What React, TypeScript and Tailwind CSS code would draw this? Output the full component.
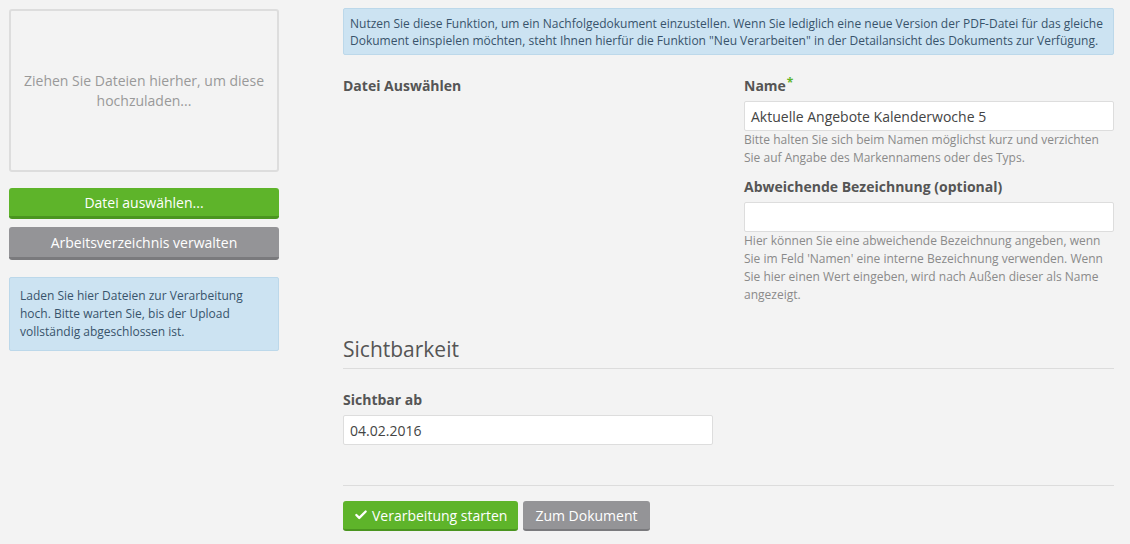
import { Check } from 'lucide-react';

const font = { fontFamily: '"Open Sans", "Liberation Sans", sans-serif' };

function Sidebar() {
  return (
    <div className="flex w-[270px] shrink-0 flex-col">
      <div className="flex h-[163px] items-center justify-center rounded-[3px] border-2 border-[#dddddd] bg-[#f3f3f3] px-[10px] text-center text-[14px] leading-[20px] text-[#999999]">
        Ziehen Sie Dateien hierher, um diese hochzuladen...
      </div>
      <button
        type="button"
        className="mt-[16px] h-[31px] rounded-[3px] border-b-[3px] border-[#4a951f] bg-[#5eb42a] text-[14px] text-white"
      >
        Datei auswählen...
      </button>
      <button
        type="button"
        className="mt-[8px] h-[33px] rounded-[3px] border-b-[3px] border-[#7a7a7d] bg-[#949497] text-[14px] text-white"
      >
        Arbeitsverzeichnis verwalten
      </button>
      <div className="mt-[17px] rounded-[2px] border border-[#bcd8ea] bg-[#cce3f2] px-[10px] py-[9px] text-[12px] leading-[18px] text-[#38536b]">
        Laden Sie hier Dateien zur Verarbeitung hoch. Bitte warten Sie, bis der Upload vollständig abgeschlossen ist.
      </div>
    </div>
  );
}

function Label({ children, required }: { children: React.ReactNode; required?: boolean }) {
  return (
    <div className="h-[20px] text-[14px] font-bold leading-[20px] text-[#555555]">
      {children}
      {required && <span className="relative -top-[4px] ml-[1px] text-[12px] leading-none text-[#5eb42a]">*</span>}
    </div>
  );
}

function Input({ value }: { value?: string }) {
  return (
    <div className="mt-[5px] flex h-[30px] items-center rounded-[2px] border border-[#dddddd] bg-white px-[6px] text-[14px] text-[#444444]">
      {value}
    </div>
  );
}

function Help({ children }: { children: React.ReactNode }) {
  return <p className="text-[12px] leading-[18px] text-[#8a8a8a]">{children}</p>;
}

function Main() {
  return (
    <div className="flex w-[771px] flex-col">
      <div className="rounded-[2px] border border-[#bcd8ea] bg-[#cce3f2] px-[6px] pb-[5px] pt-[6px] text-[12px] leading-[17px] text-[#38536b]">
        Nutzen Sie diese Funktion, um ein Nachfolgedokument einzustellen. Wenn Sie lediglich eine neue Version der PDF-Datei für das gleiche Dokument einspielen möchten, steht Ihnen hierfür die Funktion "Neu Verarbeiten" in der Detailansicht des Dokuments zur Verfügung.
      </div>

      <div className="mt-[21px] grid grid-cols-2 gap-[31px]">
        <div>
          <Label>Datei Auswählen</Label>
        </div>
        <div className="flex flex-col">
          <Label required>Name</Label>
          <Input value="Aktuelle Angebote Kalenderwoche 5" />
          <Help>Bitte halten Sie sich beim Namen möglichst kurz und verzichten Sie auf Angabe des Markennamens oder des Typs.</Help>
          <div className="mt-[10px]">
            <Label>Abweichende Bezeichnung (optional)</Label>
          </div>
          <Input />
          <Help>
            Hier können Sie eine abweichende Bezeichnung angeben, wenn Sie im Feld 'Namen' eine interne Bezeichnung verwenden. Wenn Sie hier einen Wert eingeben, wird nach Außen dieser als Name angezeigt.
          </Help>
        </div>
      </div>

      <h2 className="mt-[30px] border-b border-[#dcdcdc] pb-[4px] text-[21px] leading-[30px] text-[#555555]">Sichtbarkeit</h2>

      <div className="mt-[21px] w-[370px]">
        <Label>Sichtbar ab</Label>
        <Input value="04.02.2016" />
      </div>

      <div className="mt-[40px] border-t border-[#dcdcdc] pt-[15px]">
        <div className="flex gap-[5px]">
          <button
            type="button"
            className="flex h-[30px] items-center gap-[4px] rounded-[3px] border-b-[2px] border-[#4a951f] bg-[#5eb42a] px-[11px] text-[14px] text-white"
          >
            <Check size={14} strokeWidth={4} />
            Verarbeitung starten
          </button>
          <button
            type="button"
            className="flex h-[30px] items-center rounded-[3px] border-b-[2px] border-[#7a7a7d] bg-[#949497] px-[12px] text-[14px] text-white"
          >
            Zum Dokument
          </button>
        </div>
      </div>
    </div>
  );
}

export default function App() {
  return (
    <div className="min-h-[544px] w-[1130px] bg-[#f3f3f3]" style={font}>
      <div className="flex gap-[64px] pl-[9px] pt-[8px]">
        <div className="pt-[1px]">
          <Sidebar />
        </div>
        <Main />
      </div>
    </div>
  );
}
